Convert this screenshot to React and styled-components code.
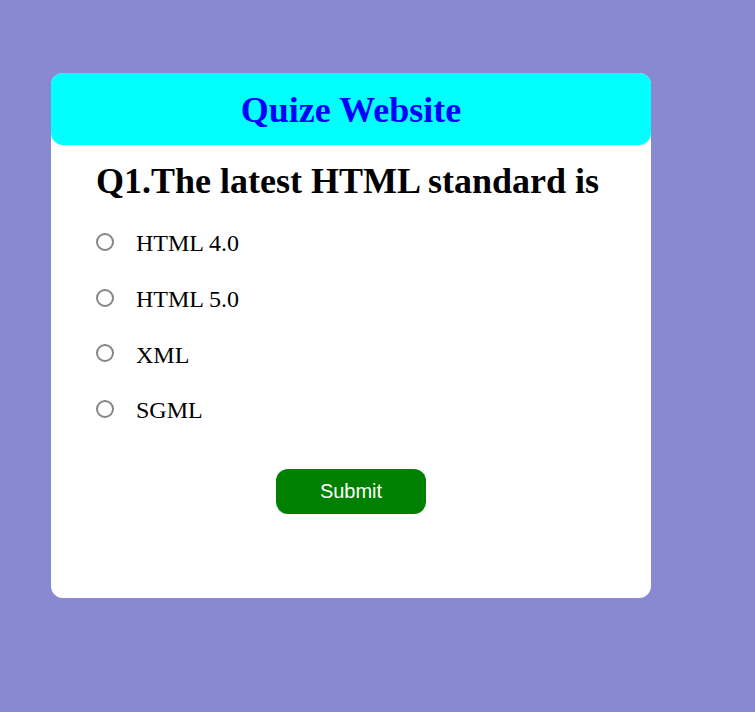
import React from "react";
import styled, { createGlobalStyle } from "styled-components";

const Global = createGlobalStyle`
  html, body { margin: 0; padding: 0; background: #8989d1; }
  body { font-family: "Liberation Serif", "Times New Roman", serif; }
`;

const Page = styled.div`
  min-height: 712px;
  padding: 73px 0 0 51px;
  box-sizing: border-box;
`;

const Card = styled.div`
  width: 600px;
  height: 525px;
  background: #ffffff;
  border-radius: 12px;
  display: flex;
  flex-direction: column;
  box-sizing: border-box;
`;

const Header = styled.div`
  height: 72px;
  background: #00ffff;
  border-radius: 12px;
  display: flex;
  align-items: center;
  justify-content: center;
`;

const Title = styled.h1`
  margin: 0;
  font-size: 36px;
  line-height: 41px;
  font-weight: bold;
  color: #0000ff;
  font-family: "Liberation Serif", "Times New Roman", serif;
  transform: translateY(1px);
`;

const Body = styled.div`
  padding: 16px 0 0 45px;
  display: flex;
  flex-direction: column;
`;

const Question = styled.h2`
  margin: 0;
  font-size: 36px;
  font-weight: bold;
  color: #000;
  line-height: 41px;
`;

const Options = styled.ul`
  list-style: none;
  margin: 14px 0 0 0;
  padding: 0;
  display: flex;
  flex-direction: column;
`;

const Option = styled.li`
  height: 55.7px;
  display: flex;
  align-items: center;
  font-size: 24px;
  color: #000;
`;

const Radio = styled.input.attrs({ type: "radio" })`
  appearance: none;
  width: 18px;
  height: 18px;
  margin: 0 22px 0 0;
  border: 2px solid #858585;
  border-radius: 50%;
  box-sizing: border-box;
  background: #fff;
  transform: translateY(-2px);
  flex: none;
  &:checked {
    background: radial-gradient(circle, #0075ff 0 4px, #fff 4.5px);
    border-color: #0075ff;
  }
`;

const Label = styled.label`
  display: flex;
  align-items: center;
  cursor: pointer;
`;

const ButtonRow = styled.div`
  display: flex;
  justify-content: center;
  margin-top: 30px;
`;

const Submit = styled.button`
  width: 150px;
  height: 45px;
  border: none;
  border-radius: 12px;
  background: #008000;
  color: #fff;
  font-family: "Liberation Sans", Arial, sans-serif;
  font-size: 20px;
  cursor: pointer;
`;

const options = ["HTML 4.0", "HTML 5.0", "XML", "SGML"];

export default function App() {
  return (
    <>
      <Global />
      <Page>
        <Card>
          <Header>
            <Title>Quize Website</Title>
          </Header>
          <Body>
            <Question>Q1.The latest HTML standard is</Question>
            <Options>
              {options.map((o, i) => (
                <Option key={o}>
                  <Label>
                    <Radio name="answer" id={`a${i}`} />
                    {o}
                  </Label>
                </Option>
              ))}
            </Options>
          </Body>
          <ButtonRow>
            <Submit>Submit</Submit>
          </ButtonRow>
        </Card>
      </Page>
    </>
  );
}
